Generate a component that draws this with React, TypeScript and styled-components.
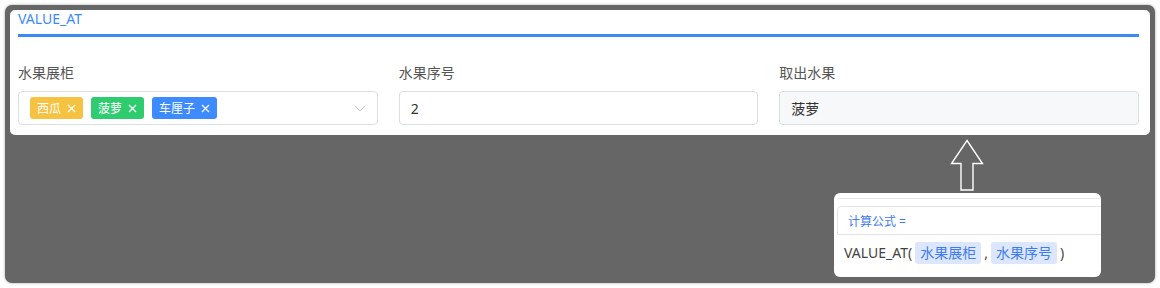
import React from 'react'
import styled, { createGlobalStyle } from 'styled-components'

const GlobalStyle = createGlobalStyle`
  html, body {
    margin: 0;
    background: #fff;
    font-family: "Noto Sans", "Noto Sans CJK SC", sans-serif;
  }
`

const BLUE = '#3d8af7'

const Stage = styled.div`
  position: relative;
  box-sizing: border-box;
  margin: 5px;
  width: 1150px;
  height: 278px;
  padding: 5px;
  background: #666;
  border-radius: 7px;
  box-shadow: 0 0 3px rgba(0, 0, 0, 0.35);
`

const Card = styled.div`
  box-sizing: border-box;
  height: 125px;
  padding: 0 11px 11px 8px;
  background: #fff;
  border-radius: 5px;
`

const Title = styled.div`
  color: ${BLUE};
  font-size: 14px;
  line-height: 18px;
  padding-bottom: 6px;
  border-bottom: 3px solid ${BLUE};
`

const Fields = styled.div`
  display: grid;
  grid-template-columns: repeat(3, 1fr);
  column-gap: 21px;
  margin-top: 26px;
`

const Field = styled.div`
  display: flex;
  flex-direction: column;
`

const Label = styled.div`
  color: #555;
  font-size: 14px;
  line-height: 20px;
  margin-bottom: 8px;
`

const Box = styled.div<{ $disabled?: boolean }>`
  box-sizing: border-box;
  display: flex;
  align-items: center;
  gap: 8px;
  height: 34px;
  padding: 0 11px;
  border: 1px solid #dcdfe6;
  border-radius: 4px;
  background: ${(p) => (p.$disabled ? '#f7f8fa' : '#fff')};
  color: #333;
  font-size: 14px;
`

const Tag = styled.span<{ $color: string }>`
  display: inline-flex;
  align-items: center;
  gap: 6px;
  height: 22px;
  padding: 0 7px;
  border-radius: 3px;
  background: ${(p) => p.$color};
  color: #fff;
  font-size: 12px;
`

const Chevron = styled.svg`
  margin-left: auto;
`

const Arrow = styled.svg`
  position: absolute;
  left: 945px;
  top: 134px;
`

const Popup = styled.div`
  position: absolute;
  left: 829px;
  top: 188px;
  width: 267px;
  height: 84px;
  box-sizing: border-box;
  padding-top: 5px;
  overflow: hidden;
  background: #fff;
  border-radius: 6px;
`

const PopupRule = styled.div`
  margin-left: 4px;
  border-top: 1px solid #e6e6e6;
`

const PopupHeader = styled.div`
  box-sizing: border-box;
  margin: 7px -10px 0 3px;
  height: 29px;
  padding-left: 10px;
  display: flex;
  align-items: center;
  border: 1px solid #e4e4e4;
  border-top-left-radius: 4px;
  color: #3f7cf0;
  font-size: 12px;
`

const Formula = styled.div`
  display: flex;
  align-items: center;
  gap: 3px;
  margin: 7px 0 0 10px;
  color: #444;
  font-size: 14px;
  line-height: 22px;
`

const Chip = styled.span`
  padding: 0 5px;
  height: 22px;
  border-radius: 3px;
  background: #dce6fd;
  color: #3f7cf0;
  font-size: 14px;
`

const Close = () => (
  <svg width="9" height="9" viewBox="0 0 9 9">
    <path d="M1 1L8 8M8 1L1 8" stroke="#fff" strokeWidth="1.2" fill="none" />
  </svg>
)

const tags = [
  { label: '西瓜', color: '#f5c242' },
  { label: '菠萝', color: '#2ecb6f' },
  { label: '车厘子', color: '#3d8bff' },
]

export default function App() {
  return (
    <>
      <GlobalStyle />
      <Stage>
        <Card>
          <Title>VALUE_AT</Title>
          <Fields>
            <Field>
              <Label>水果展柜</Label>
              <Box>
                {tags.map((t) => (
                  <Tag key={t.label} $color={t.color}>
                    {t.label}
                    <Close />
                  </Tag>
                ))}
                <Chevron width="12" height="7" viewBox="0 0 12 7">
                  <path d="M0.5 0.5L6 6L11.5 0.5" stroke="#c0c4cc" strokeWidth="1" fill="none" />
                </Chevron>
              </Box>
            </Field>
            <Field>
              <Label>水果序号</Label>
              <Box>2</Box>
            </Field>
            <Field>
              <Label>取出水果</Label>
              <Box $disabled>菠萝</Box>
            </Field>
          </Fields>
        </Card>

        <Arrow width="34" height="52" viewBox="0 0 34 52">
          <path
            d="M17 1.5L32.5 24.5H23V51H11V24.5H1.5Z"
            stroke="#fff"
            strokeWidth="1.4"
            fill="none"
            strokeLinejoin="miter"
          />
        </Arrow>

        <Popup>
          <PopupRule />
          <PopupHeader>计算公式 =</PopupHeader>
          <Formula>
            VALUE_AT(<Chip>水果展柜</Chip>,<Chip>水果序号</Chip>)
          </Formula>
        </Popup>
      </Stage>
    </>
  )
}
